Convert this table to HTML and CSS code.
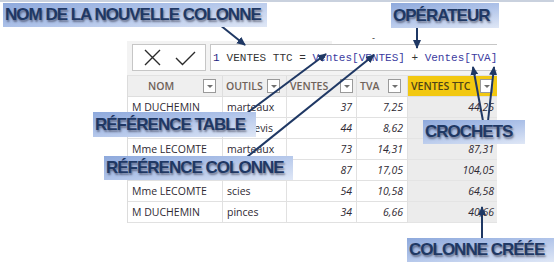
FILE: index.html
```html
<!DOCTYPE html>
<html lang="fr">
<head>
<meta charset="utf-8">
<title>Colonne calculée</title>
<link rel="stylesheet" href="styles.css">
</head>
<body>
<div class="page">
  <div class="topline"></div>
  <main class="app">
    <div class="formula-bar">
      <div class="actions">
        <svg width="72" height="25" viewBox="0 0 72 25">
          <path d="M12 5 L27 20 M27 5 L12 20" stroke="#2b2b2b" stroke-width="1.4" fill="none"/>
          <path d="M43 13 L49.5 19.5 L62 7" stroke="#2b2b2b" stroke-width="1.4" fill="none"/>
        </svg>
      </div>
      <div class="formula"><span class="ln">1</span><span class="txt">VENTES TTC = </span><span class="ref">Ventes[VENTES]</span><span class="txt"> + </span><span class="ref">Ventes[TVA]</span></div>
    </div>
    <div class="table">
      <div class="hd hd-center"><span class="hname">NOM</span><span class="dd"></span></div>
      <div class="hd"><span class="hname">OUTILS</span><span class="dd"></span></div>
      <div class="hd"><span class="hname">VENTES</span><span class="dd dd-tight"></span></div>
      <div class="hd"><span class="hname">TVA</span><span class="dd"></span></div>
      <div class="hd hd-new"><span class="hname">VENTES TTC</span><span class="dd"></span></div>

      <div class="c">M DUCHEMIN</div><div class="c">marteaux</div><div class="c n">37</div><div class="c n">7,25</div><div class="c n new">44,25</div>
      <div class="c">M LECOMTE</div><div class="c">tournevis</div><div class="c n">44</div><div class="c n">8,62</div><div class="c n new">52,62</div>
      <div class="c">Mme LECOMTE</div><div class="c">marteaux</div><div class="c n">73</div><div class="c n">14,31</div><div class="c n new">87,31</div>
      <div class="c">M DUCHEMIN</div><div class="c">scies</div><div class="c n">87</div><div class="c n">17,05</div><div class="c n new">104,05</div>
      <div class="c">Mme LECOMTE</div><div class="c">scies</div><div class="c n">54</div><div class="c n">10,58</div><div class="c n new">64,58</div>
      <div class="c">M DUCHEMIN</div><div class="c">pinces</div><div class="c n">34</div><div class="c n">6,66</div><div class="c n new">40,66</div>
    </div>
  </main>

  <div class="mask"><span class="dash">-</span></div>

  <svg class="arrows" width="554" height="262" viewBox="0 0 554 262">
    <defs>
      <marker id="ah" markerUnits="userSpaceOnUse" markerWidth="10" markerHeight="10" refX="8" refY="4" orient="auto">
        <path d="M0 0 L9 4 L0 8 Z" fill="#1f3864"/>
      </marker>
    </defs>
    <g stroke="#1f3864" stroke-width="2" fill="none" marker-end="url(#ah)">
      <line x1="215" y1="21" x2="245" y2="45"/>
      <line x1="417" y1="28" x2="417" y2="48"/>
      <line x1="247" y1="113" x2="326" y2="54"/>
      <line x1="247" y1="157" x2="374" y2="55"/>
      <line x1="483" y1="121" x2="473" y2="67"/>
      <line x1="488" y1="121" x2="494" y2="67"/>
      <line x1="482" y1="238" x2="482" y2="207"/>
    </g>
  </svg>

  <div class="label l-nom">NOM DE LA NOUVELLE COLONNE</div>
  <div class="label l-op">OPÉRATEUR</div>
  <div class="label l-table">RÉFÉRENCE TABLE</div>
  <div class="label l-col">RÉFÉRENCE COLONNE</div>
  <div class="label l-croch">CROCHETS</div>
  <div class="label l-cree">COLONNE CRÉÉE</div>
</div>
</body>
</html>
```

FILE: styles.css
```css
* { box-sizing: border-box; }

html, body {
  margin: 0;
  padding: 0;
  background: #ffffff;
}

.page {
  position: relative;
  width: 554px;
  height: 262px;
  overflow: hidden;
  font-family: "Open Sans", "Noto Sans", sans-serif;
}

.topline {
  height: 2px;
  background: #c9d1de;
}

.app {
  margin: 39px 0 0 127px;
  width: 370px;
}

.formula-bar {
  display: flex;
  gap: 4px;
  height: 35px;
  padding: 3px 0 5px 5px;
  background: #f3f3f3;
}

.actions {
  width: 74px;
  height: 27px;
  background: #ffffff;
  border: 1px solid #c6c6c6;
}

.actions svg { display: block; }

.formula {
  flex: 1;
  height: 27px;
  background: #ffffff;
  border: 1px solid #c6c6c6;
  border-right: none;
  padding-left: 2px;
  display: flex;
  align-items: center;
  white-space: pre;
  font-family: "Liberation Mono", "DejaVu Sans Mono", monospace;
  font-size: 11px;
  color: #333333;
  overflow: hidden;
}

.ln {
  color: #23237f;
  margin-right: 7px;
}

.ref { color: #3b3ba0; }

.table {
  display: grid;
  grid-template-columns: 95px 64px 70px 51px 89px;
  grid-auto-rows: 21px;
  border-left: 1px solid #dcdcdc;
  border-top: 1px solid #e2e2e2;
  margin-top: -1px;
}

.hd {
  display: flex;
  align-items: center;
  justify-content: space-between;
  padding: 0 6px 0 3px;
  background: #efefef;
  border-right: 1px solid #dedede;
  border-bottom: 1px solid #dedede;
  font-size: 10.5px;
  font-weight: 600;
  color: #6f6259;
}

.hd-center .hname {
  flex: 1;
  text-align: center;
  padding-right: 12px;
}

.hd-new {
  background: #f2c811;
  color: #4f4416;
  border-right: none;
  padding-right: 4px;
}

.dd {
  position: relative;
  width: 13px;
  height: 14px;
  flex: none;
  background: #ffffff;
  border: 1px solid #9a9a9a;
}

.dd-tight { margin-right: -3px; }

.dd::after {
  content: "";
  position: absolute;
  left: 3px;
  top: 5px;
  border-left: 3px solid transparent;
  border-right: 3px solid transparent;
  border-top: 3px solid #707070;
}

.c {
  display: flex;
  align-items: center;
  padding: 0 4px;
  background: #ffffff;
  border-right: 1px solid #e1e1e1;
  border-bottom: 1px solid #e1e1e1;
  font-size: 10.5px;
  color: #2f2a33;
  white-space: nowrap;
  overflow: hidden;
}

.n {
  justify-content: flex-end;
  font-style: italic;
}

.new {
  background: #ececec;
  border-right: none;
  border-bottom-color: #e4e4e4;
  padding-right: 3px;
}

.mask {
  position: absolute;
  left: 332px;
  top: 36px;
  width: 170px;
  height: 8px;
  background: #ffffff;
}

.dash {
  position: absolute;
  left: 40px;
  top: -3px;
  font-size: 9px;
  color: #333333;
  font-family: "Liberation Sans", sans-serif;
}

.arrows {
  position: absolute;
  left: 0;
  top: 0;
  pointer-events: none;
}

.label {
  position: absolute;
  padding-left: 2px;
  background: linear-gradient(172deg, #8ea9dc 0%, #afc3e9 45%, #dfe7f6 100%);
  font-family: "Liberation Sans", Arial, sans-serif;
  font-weight: bold;
  font-size: 17px;
  letter-spacing: -1px;
  color: #1f3864;
  text-shadow: 1px 2px 2px rgba(30, 30, 50, 0.5);
  white-space: nowrap;
}

.l-nom   { left: 3px;   top: 3px;   width: 264px; height: 24px; line-height: 24px; }
.l-op    { left: 391px; top: 3px;   width: 108px; height: 25px; line-height: 25px; }
.l-table { left: 93px;  top: 112px; width: 163px; height: 25px; line-height: 25px; }
.l-col   { left: 104px; top: 156px; width: 189px; height: 24px; line-height: 24px; }
.l-croch { left: 423px; top: 120px; width: 102px; height: 24px; line-height: 24px; }
.l-cree  { left: 407px; top: 238px; width: 147px; height: 24px; line-height: 24px; }
```
